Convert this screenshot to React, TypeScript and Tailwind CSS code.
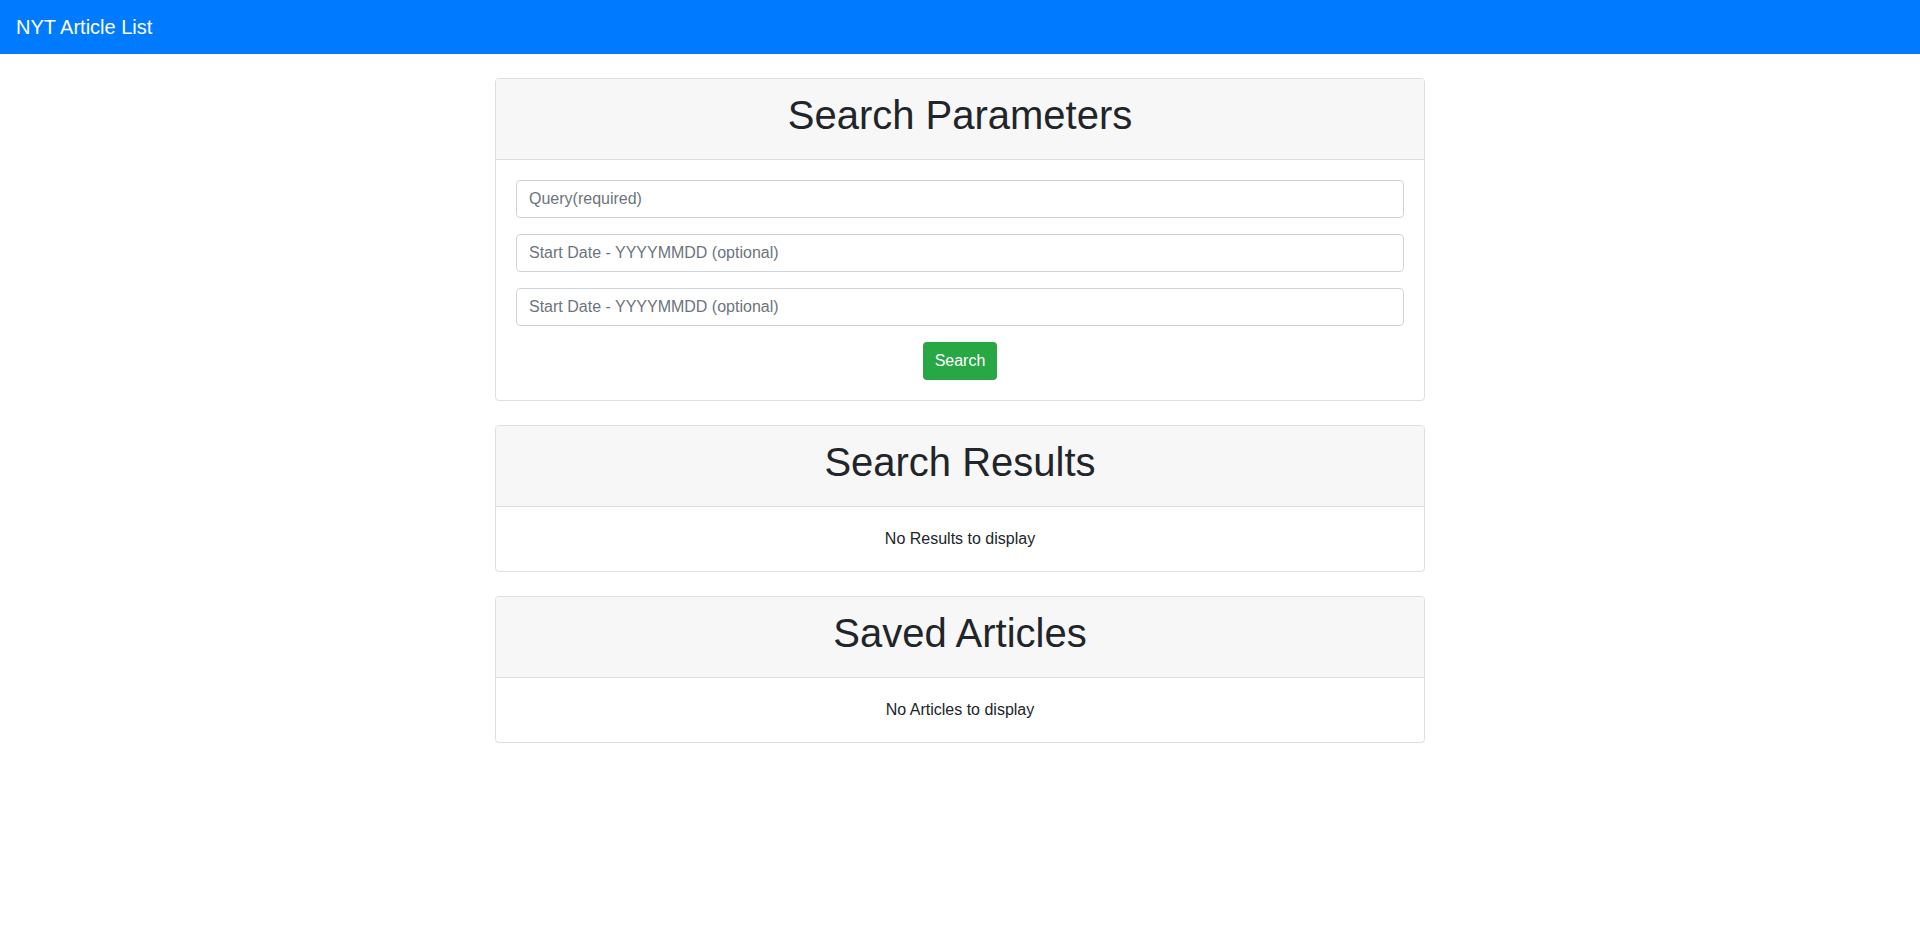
import { FC, ReactNode } from 'react'

const Card: FC<{ title: string; children: ReactNode }> = ({ title, children }) => (
    <div className="rounded-[4px] border border-[#dfdfdf] bg-white">
        <div className="rounded-t-[3px] border-b border-[#dfdfdf] bg-[#f7f7f7] px-5 pt-3 pb-5">
            <h1 className="text-center text-[40px] leading-[48px] font-normal text-[#212529]">{title}</h1>
        </div>
        <div className="p-5">{children}</div>
    </div>
)

const Field: FC<{ placeholder: string }> = ({ placeholder }) => (
    <input
        type="text"
        placeholder={placeholder}
        className="mb-4 block h-[38px] w-full rounded-[4px] border border-[#ced4da] px-3 text-base text-[#495057] placeholder:text-[#6c757d] focus:outline-none"
    />
)

const App: FC = () => (
    <div className="min-h-[940px] bg-white font-['Liberation_Sans',Arial,sans-serif] text-base text-[#212529]">
        <nav className="flex h-[54px] items-center bg-[#007bff] px-4">
            <span className="text-[20px] leading-[30px] text-white">NYT Article List</span>
        </nav>
        <div className="mx-auto flex w-[930px] flex-col gap-6 pt-6">
            <Card title="Search Parameters">
                <Field placeholder="Query(required)" />
                <Field placeholder="Start Date - YYYYMMDD (optional)" />
                <Field placeholder="Start Date - YYYYMMDD (optional)" />
                <div className="flex justify-center">
                    <button className="h-[38px] rounded-[4px] bg-[#28a745] px-3 text-base text-white">Search</button>
                </div>
            </Card>
            <Card title="Search Results">
                <p className="text-center leading-6">No Results to display</p>
            </Card>
            <Card title="Saved Articles">
                <p className="text-center leading-6">No Articles to display</p>
            </Card>
        </div>
    </div>
)

export default App
